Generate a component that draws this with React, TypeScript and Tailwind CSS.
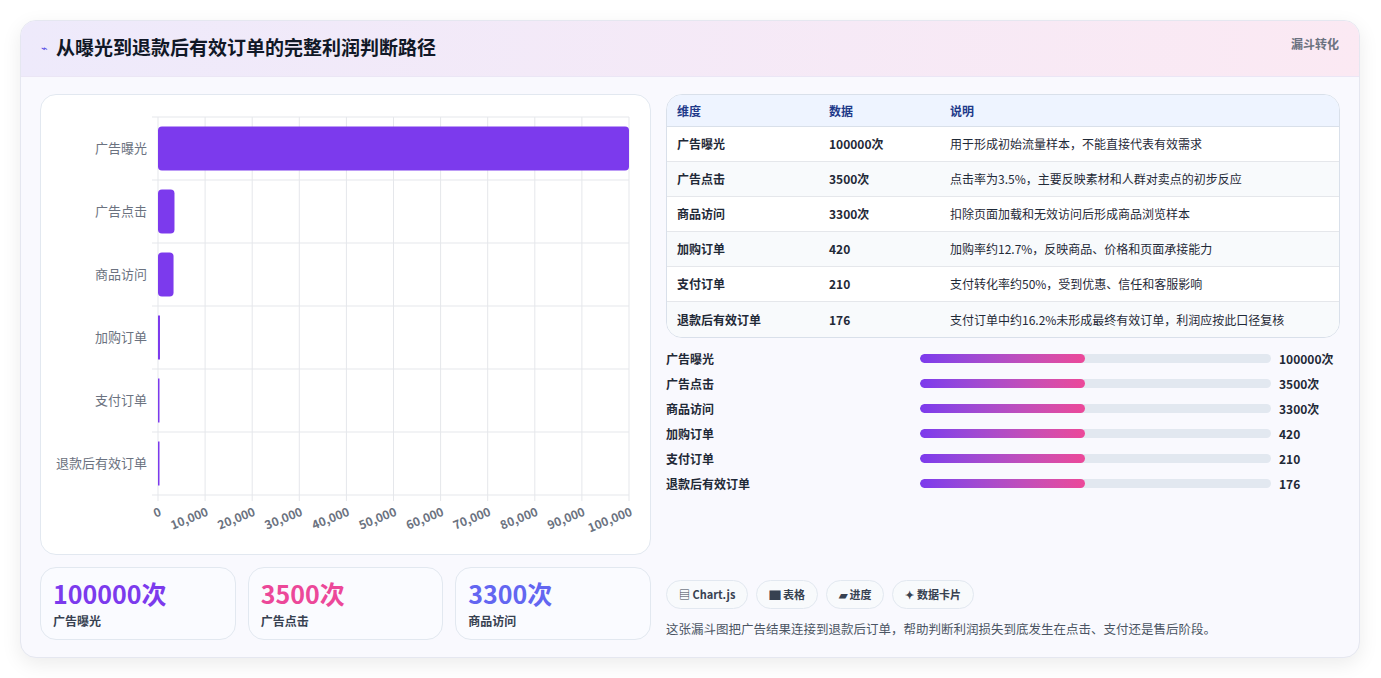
import React from "react";

const rows = [
  ["广告曝光", "100000次", "用于形成初始流量样本，不能直接代表有效需求", 100000],
  ["广告点击", "3500次", "点击率为3.5%，主要反映素材和人群对卖点的初步反应", 3500],
  ["商品访问", "3300次", "扣除页面加载和无效访问后形成商品浏览样本", 3300],
  ["加购订单", "420", "加购率约12.7%，反映商品、价格和页面承接能力", 420],
  ["支付订单", "210", "支付转化率约50%，受到优惠、信任和客服影响", 210],
  ["退款后有效订单", "176", "支付订单中约16.2%未形成最终有效订单，利润应按此口径复核", 176],
] as const;

function Chart() {
  const L = 117, R = 588, T = 22, B = 400;
  const w = R - L;
  const rh = (B - T) / 6;
  return (
    <svg width="610" height="460" className="block">
      {Array.from({ length: 11 }).map((_, i) => (
        <line key={"v" + i} x1={L + (w * i) / 10} x2={L + (w * i) / 10} y1={T} y2={B + 6} stroke="#e5e7eb" />
      ))}
      {Array.from({ length: 7 }).map((_, i) => (
        <line key={"h" + i} x1={L - 6} x2={R} y1={T + rh * i} y2={T + rh * i} stroke="#e5e7eb" />
      ))}
      {rows.map((r, i) => {
        const bw = Math.max(1.5, (w * (r[3] as number)) / 100000);
        const cy = T + rh * i + rh / 2;
        return (
          <g key={i}>
            <rect x={L} y={cy - 22} width={bw} height={44} rx={bw > 6 ? 4 : 0} fill={i === 0 ? "#7c3aed" : "#7c3aed"} />
            <text x={L - 11} y={cy + 4} textAnchor="end" fontSize="13" fill="#6b7280">{r[0]}</text>
          </g>
        );
      })}
      {Array.from({ length: 11 }).map((_, i) => {
        const x = L + (w * i) / 10;
        const label = i === 0 ? "0" : (i * 10000).toLocaleString("en-US");
        return (
          <text key={"t" + i} x={x + 4} y={B + 20} textAnchor="end" fontSize="12" fontWeight="600" fill="#6b7280" transform={`rotate(-22 ${x + 4} ${B + 20})`}>{label}</text>
        );
      })}
    </svg>
  );
}

export default function App() {
  const font = { fontFamily: '"Noto Sans CJK SC", "Noto Sans", sans-serif' };
  return (
    <div style={font} className="w-[1381px] h-[678px] bg-white pt-5 px-5">
      <div className="w-[1340px] h-[638px] rounded-2xl border border-[#e5e7f0] bg-[#f9f9fe] shadow-[0_6px_20px_rgba(0,0,0,0.08)] overflow-hidden flex flex-col">
        <div className="h-[56px] shrink-0 flex items-start justify-between px-5 pt-3 bg-gradient-to-r from-[#eeeafb] to-[#fbe9f3] border-b border-[#ebe6f5]">
          <div className="flex items-center gap-2">
            <span className="text-[#4f46e5] text-[11px]">⌁</span>
            <span className="text-[19px] font-bold text-[#111827]">从曝光到退款后有效订单的完整利润判断路径</span>
          </div>
          <span className="text-[12px] font-bold text-[#6b7280] mt-[2px]">漏斗转化</span>
        </div>
        <div className="flex gap-[15px] px-[19px] pt-[17px]">
          <div className="w-[611px] flex flex-col gap-3">
            <div className="h-[461px] rounded-2xl border border-[#e2e8f0] bg-white"><Chart /></div>
            <div className="grid grid-cols-3 gap-3">
              {[["100000次", "广告曝光", "text-[#7c3aed]"], ["3500次", "广告点击", "text-[#ec4899]"], ["3300次", "商品访问", "text-[#6366f1]"]].map(([v, l, c]) => (
                <div key={l} className="h-[73px] rounded-2xl border border-[#e2e8f0] bg-[#fafbff] px-3 pt-2">
                  <div className={`text-[25px] font-bold leading-[34px] ${c}`}>{v}</div>
                  <div className="text-[12px] font-semibold text-[#374151] mt-[2px]">{l}</div>
                </div>
              ))}
            </div>
          </div>
          <div className="flex-1 flex flex-col">
            <div className="rounded-2xl border border-[#d9e0ea] overflow-hidden bg-white text-[12px]">
              <div className="flex h-[32px] items-center bg-[#eef4ff] border-b border-[#d9e0ea] font-bold text-[#1e3a8a]">
                <div className="w-[162px] pl-[10px]">维度</div><div className="w-[121px]">数据</div><div>说明</div>
              </div>
              {rows.map((r, i) => (
                <div key={i} className={`flex h-[35px] items-center text-[#1f2937] ${i < 5 ? "border-b border-[#e5e7eb]" : ""} ${i % 2 ? "bg-[#f8fafc]" : "bg-white"}`}>
                  <div className="w-[162px] pl-[10px] font-semibold">{r[0]}</div>
                  <div className="w-[121px] font-semibold">{r[1]}</div>
                  <div>{r[2]}</div>
                </div>
              ))}
            </div>
            <div className="flex flex-col gap-[6px] mt-[11px]">
              {rows.map((r, i) => (
                <div key={i} className="flex items-center h-[19px] text-[12px] font-bold text-[#1f2937]">
                  <div className="w-[254px]">{r[0]}</div>
                  <div className="w-[351px] h-[9px] rounded-full bg-[#e2e8f0] overflow-hidden">
                    <div className="w-[165px] h-full rounded-full bg-gradient-to-r from-[#7c3aed] to-[#ec4899]" />
                  </div>
                  <div className="ml-2">{r[1]}</div>
                </div>
              ))}
            </div>
            <div className="flex gap-2 mt-[87px]">
              {["▤ Chart.js", "▇ 表格", "▰ 进度", "✦ 数据卡片"].map((t) => (
                <span key={t} className="h-[29px] px-3 rounded-full border border-[#e2e8f0] bg-[#f8fafc] text-[11px] font-bold text-[#374151] flex items-center">{t}</span>
              ))}
            </div>
            <div className="mt-[11px] text-[12.5px] text-[#4b5563]">这张漏斗图把广告结果连接到退款后订单，帮助判断利润损失到底发生在点击、支付还是售后阶段。</div>
          </div>
        </div>
      </div>
    </div>
  );
}
